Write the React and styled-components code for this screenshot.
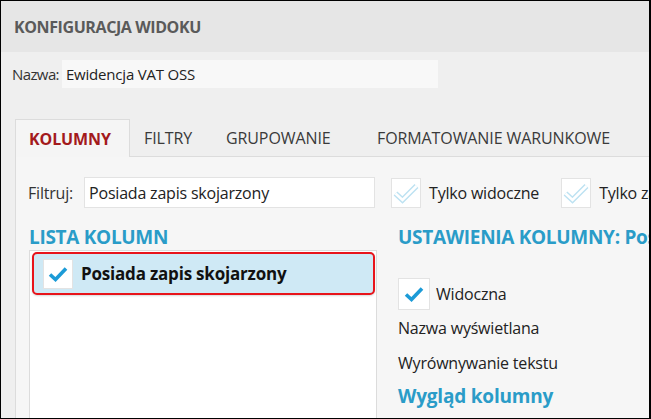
import React from 'react';
import styled, { createGlobalStyle } from 'styled-components';

const GlobalStyle = createGlobalStyle`
  html, body {
    margin: 0;
    padding: 0;
    background: #ffffff;
  }
  * {
    box-sizing: border-box;
  }
`;

const Window = styled.div`
  width: 651px;
  height: 419px;
  overflow: hidden;
  background: #efefef;
  border: 1px solid #000;
  border-right-width: 2px;
  font-family: "Open Sans", "Noto Sans", sans-serif;
  color: #2b2b2b;
  display: flex;
  flex-direction: column;
`;

const Header = styled.div`
  height: 51px;
  flex: none;
  background: #e6e6e6;
  display: flex;
  align-items: center;
  padding-left: 13px;
`;

const Title = styled.h1`
  margin: 0;
  font-size: 16px;
  font-weight: 700;
  color: #5a5a5a;
  letter-spacing: -0.4px;
`;

const NameRow = styled.div`
  display: flex;
  align-items: center;
  margin-top: 8px;
  padding-left: 11px;
  flex: none;
`;

const Label = styled.span`
  font-size: ${p => p.$size || 16}px;
  color: #333;
  letter-spacing: ${p => (p.$tight ? -0.6 : -0.2)}px;
  white-space: nowrap;
`;

const NameInput = styled.div`
  width: 376px;
  height: 28px;
  margin-left: 3px;
  background: #f8f8f8;
  display: flex;
  align-items: center;
  padding-left: 4px;
  font-size: 15px;
  letter-spacing: -0.2px;
  color: #222;
`;

const Tabs = styled.div`
  display: flex;
  margin: 31px 0 0 14px;
  height: 38px;
  border-bottom: 1px solid #dcdcdc;
  flex: none;
`;

const Tab = styled.div`
  width: ${p => p.$w}px;
  height: ${p => (p.$active ? 38 : 37)}px;
  padding-left: 13px;
  display: flex;
  align-items: center;
  font-size: 16px;
  letter-spacing: -0.1px;
  text-transform: uppercase;
  white-space: nowrap;
  color: ${p => (p.$active ? '#a31a1c' : '#3a3a3a')};
  font-weight: ${p => (p.$active ? 700 : 400)};
  background: ${p => (p.$active ? '#f5f5f5' : 'transparent')};
  border: 1px solid ${p => (p.$active ? '#dcdcdc' : 'transparent')};
  border-bottom: none;
  margin-bottom: -1px;
`;

const Panel = styled.div`
  flex: 1;
  margin-left: 14px;
  background: #f6f6f6;
  border-left: 1px solid #dcdcdc;
  padding: 20px 0 0 12px;
`;

const FilterRow = styled.div`
  display: flex;
  align-items: center;
  height: 31px;
`;

const FilterInput = styled.div`
  width: 291px;
  height: 31px;
  margin-left: 11px;
  flex: none;
  background: #fff;
  border: 1px solid #e3e3e3;
  display: flex;
  align-items: center;
  padding-left: 4px;
  font-size: 16px;
  letter-spacing: -0.2px;
  color: #222;
`;

const CheckOption = styled.label`
  display: flex;
  align-items: center;
  gap: 8px;
  margin-left: ${p => p.$gap || 0}px;
  font-size: 16px;
  letter-spacing: -0.2px;
  color: #222;
  white-space: nowrap;
`;

const Box = styled.span`
  width: ${p => p.$size}px;
  height: ${p => p.$size}px;
  flex: none;
  background: #fff;
  border: 1px solid #e3e3e3;
  display: flex;
  align-items: center;
  justify-content: center;
`;

const Columns = styled.div`
  display: grid;
  grid-template-columns: 348px 1fr;
  column-gap: 21px;
  margin-top: 18px;
  padding-left: 1px;
`;

const Heading = styled.h2`
  margin: 0;
  font-size: 19px;
  font-weight: 700;
  color: #2a9cc8;
  letter-spacing: -0.3px;
  white-space: nowrap;
  line-height: 22px;
`;

const Caps = styled.span`
  text-transform: uppercase;
`;

const ListBox = styled.div`
  margin-top: 2px;
  height: 200px;
  background: #fff;
  border: 1px solid #dcdcdc;
  padding: 1px 1px 0 2px;
`;

const SelectedRow = styled.div`
  height: 43px;
  background: #cfe9f5;
  border: 2px solid #e8141b;
  border-radius: 5px;
  box-shadow: 0 1px 2px rgba(0, 0, 0, 0.15);
  display: flex;
  align-items: center;
  padding-left: 9px;
  gap: 8px;
  font-size: 17px;
  font-weight: 700;
  color: #111;
  letter-spacing: -0.2px;
`;

const Settings = styled.div`
  display: flex;
  flex-direction: column;
  min-width: 0;
`;

const SettingCheck = styled(CheckOption)`
  margin-top: 30px;
  gap: 6px;
`;

const SettingLabel = styled.div`
  font-size: 16px;
  line-height: 22px;
  color: #222;
  letter-spacing: -0.2px;
  margin-top: ${p => p.$mt}px;
`;

const SubHeading = styled.div`
  margin-top: 9px;
  font-size: 19px;
  line-height: 26px;
  font-weight: 700;
  color: #2a9cc8;
  letter-spacing: -0.2px;
`;

const Check = ({ faint }) =>
  faint ? (
    <svg width="26" height="22" viewBox="0 0 26 22">
      <path d="M2.5 11.5 L9.5 18 L23.5 4" fill="none" stroke="#bde2f2" strokeWidth="5.5" />
      <path d="M2.5 11.5 L9.5 18 L23.5 4" fill="none" stroke="#ffffff" strokeWidth="2.6" />
    </svg>
  ) : (
    <svg width="20" height="16" viewBox="0 0 20 16">
      <path d="M2 8.5 L7.5 13.5 L18 2.5" fill="none" stroke="#1c9bd7" strokeWidth="3.6" />
    </svg>
  );

const Checkbox = ({ size = 30, faint }) => (
  <Box $size={size}>
    <Check faint={faint} />
  </Box>
);

const tabs = [
  { name: 'Kolumny', w: 115, active: true },
  { name: 'Filtry', w: 82 },
  { name: 'Grupowanie', w: 151 },
  { name: 'Formatowanie warunkowe', w: 280 },
];

const columnName = 'Posiada zapis skojarzony';

export default function App() {
  return (
    <>
      <GlobalStyle />
      <Window>
        <Header>
          <Title>KONFIGURACJA WIDOKU</Title>
        </Header>

        <NameRow>
          <Label $size={15} $tight>Nazwa:</Label>
          <NameInput>Ewidencja VAT OSS</NameInput>
        </NameRow>

        <Tabs>
          {tabs.map(t => (
            <Tab key={t.name} $w={t.w} $active={t.active}>
              {t.name}
            </Tab>
          ))}
        </Tabs>

        <Panel>
          <FilterRow>
            <Label>Filtruj:</Label>
            <FilterInput>{columnName}</FilterInput>
            <CheckOption $gap={16}>
              <Checkbox faint />
              Tylko widoczne
            </CheckOption>
            <CheckOption $gap={22}>
              <Checkbox faint />
              Tylko zaznaczone
            </CheckOption>
          </FilterRow>

          <Columns>
            <div>
              <Heading><Caps>Lista kolumn</Caps></Heading>
              <ListBox>
                <SelectedRow>
                  <Checkbox size={30} />
                  {columnName}
                </SelectedRow>
              </ListBox>
            </div>

            <Settings>
              <Heading><Caps>Ustawienia kolumny:</Caps> {columnName}</Heading>
              <SettingCheck>
                <Checkbox size={32} />
                Widoczna
              </SettingCheck>
              <SettingLabel $mt={7}>Nazwa wyświetlana</SettingLabel>
              <SettingLabel $mt={13}>Wyrównywanie tekstu</SettingLabel>
              <SubHeading>Wygląd kolumny</SubHeading>
            </Settings>
          </Columns>
        </Panel>
      </Window>
    </>
  );
}
